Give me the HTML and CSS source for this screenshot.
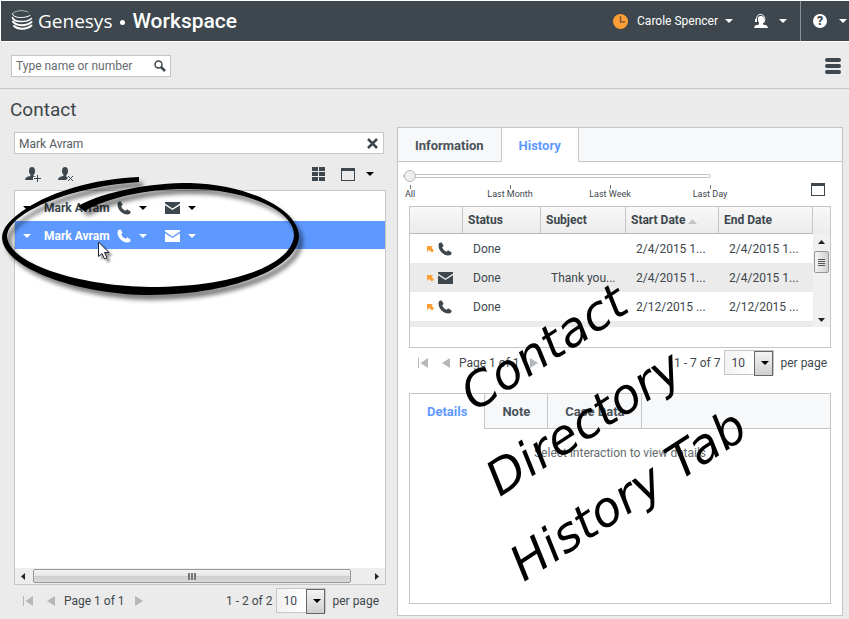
FILE: index.html
```html
<!DOCTYPE html>
<html lang="en">
<head>
<meta charset="utf-8">
<title>Genesys Workspace</title>
<link rel="stylesheet" href="styles.css">
</head>
<body>
<svg class="defs" aria-hidden="true">
  <symbol id="phone" viewBox="0 0 14 14"><path d="M1 1.200 3.400.200 5.700 3.800 4.200 5.300C4.800 7.200 6.600 9 8.600 9.800L10.200 8.300 13.800 10.700 12.800 13C7 15.500-1.500 8 1 1.200Z"/></symbol>
  <symbol id="mail" viewBox="0 0 15 12"><path d="M0 0H15V1.500L7.500 6.500 0 1.500ZM0 3.200 7.500 8 15 3.200V12H0Z"/></symbol>
  <symbol id="caret" viewBox="0 0 8 4"><path d="M0 0H8L4 4Z"/></symbol>
  <symbol id="person" viewBox="0 0 17 15"><ellipse cx="7" cy="4" rx="3" ry="4"/><path d="M5.500 7H8.500V9L11 10V13H0C0 10.500 2 9.800 5.500 9Z"/></symbol>
  <symbol id="window" viewBox="0 0 14 13"><path fill-rule="evenodd" d="M0 0H14V13H0ZM1 3V12H13V3Z"/></symbol>
  <symbol id="first" viewBox="0 0 10 10"><path d="M0 0H1V10H0ZM10 0V10L2.500 5Z"/></symbol>
  <symbol id="prev" viewBox="0 0 8 10"><path d="M8 0V10L0 5Z"/></symbol>
  <symbol id="next" viewBox="0 0 8 10"><path d="M0 0V10L8 5Z"/></symbol>
  <symbol id="inbound" viewBox="0 0 7 7"><path d="M0 0H6L4.500 1.600 7 4.500 5 6.500 2 4 0 6Z"/></symbol>
</svg>

<header class="topbar">
  <svg class="logo" viewBox="0 0 22 22" aria-hidden="true"><g fill="none" stroke="#fff" stroke-linecap="round"><path stroke-width="1" opacity=".6" d="M17 2C12-.500 3 .500 1.500 4"/><path stroke-width="1" d="M1.500 4C2 8.500 14 8.500 19 5.500"/><path stroke-width="1.600" d="M1.500 7.500C3 13 16 12.500 20.500 8.500"/><path stroke-width="2" d="M2 11.500C5 16.500 16 16 20.500 12"/><path stroke-width="2" d="M3 16C7 20 16 19.500 20.500 15.500"/></g></svg>
  <span class="brand">Genesys</span>
  <i class="dot"></i>
  <span class="product">Workspace</span>
  <button class="topbtn user"><svg width="15" height="15" viewBox="0 0 15 15"><circle cx="7.500" cy="7.500" r="7.500" fill="#ff9e35"/><path d="M7.500 2V8H12" fill="none" stroke="#7b5a38" stroke-width="1.500"/></svg><span>Carole Spencer</span><svg class="caret"><use href="#caret"/></svg></button>
  <button class="topbtn agent" aria-label="Agent"><svg width="16" height="16" viewBox="0 0 16 16"><path d="M3.500 7C2.500-.500 12.500-.500 11.800 7L11 9.500H6" fill="none" stroke="#fff"/><path fill="#fff" d="M5 4.500C6 2.500 10 2.500 11 4.500V8C10 11 6 11 5 8ZM6 10H10V11.500L14 12.500 15 15H1L2 12.500 6 11.500Z"/><path d="M3 6V9" stroke="#fff" stroke-width="2"/></svg><svg class="caret"><use href="#caret"/></svg></button>
  <button class="topbtn help" aria-label="Help"><span class="question">?</span><svg class="caret"><use href="#caret"/></svg></button>
</header>

<div class="toolbar">
  <div class="search">
    <input type="text" placeholder="Type name or number" aria-label="Type name or number">
    <svg width="12" height="12" viewBox="0 0 12 12"><circle cx="4.500" cy="4.500" r="3.500" fill="none" stroke="#3d474d" stroke-width="1.500"/><path d="M7 7 11 11" stroke="#3d474d" stroke-width="2.500"/></svg>
  </div>
  <button class="menu" aria-label="Menu"><i></i><i></i><i></i></button>
</div>

<h1>Contact</h1>
<main>
  <section class="directory">
    <div class="filter"><input type="text" value="Mark Avram" aria-label="Contact name"><button aria-label="Clear"><svg width="11" height="11" viewBox="0 0 11 11"><path d="M1 1 10 10M10 1 1 10" stroke="#3d474d" stroke-width="2.500"/></svg></button></div>
    <div class="actions">
      <button aria-label="Add contact"><svg width="17" height="15"><use href="#person"/><path d="M8 11.500H16M12.500 8V15" stroke="#ebebeb" stroke-width="3"/><path d="M9 11.500H16M12.500 8V15" stroke="#3d474d"/></svg></button>
      <button aria-label="Remove contact"><svg width="17" height="15"><use href="#person"/><path d="M9 8 15 14M15 8 9 14" stroke="#ebebeb" stroke-width="3"/><path d="M10 9 15 14M15 9 10 14" stroke="#3d474d"/></svg></button>
      <span class="spacer"></span>
      <button aria-label="Grid view"><svg width="13" height="14" viewBox="0 0 13 14"><path d="M0 0H6V4H0ZM7 0H13V4H7ZM0 5H6V9H0ZM7 5H13V9H7ZM0 10H6V14H0ZM7 10H13V14H7Z"/></svg></button>
      <button aria-label="Layout"><svg width="14" height="13"><use href="#window"/></svg></button>
      <button aria-label="Layout options"><svg class="caret black"><use href="#caret"/></svg></button>
    </div>
    <div class="list">
      <div class="contact"><svg class="caret"><use href="#caret"/></svg><b>Mark Avram</b><svg class="phone"><use href="#phone"/></svg><svg class="caret"><use href="#caret"/></svg><svg class="mail"><use href="#mail"/></svg><svg class="caret"><use href="#caret"/></svg></div>
      <div class="contact selected"><svg class="caret"><use href="#caret"/></svg><b>Mark Avram</b><svg class="phone"><use href="#phone"/></svg><svg class="caret"><use href="#caret"/></svg><svg class="mail"><use href="#mail"/></svg><svg class="caret"><use href="#caret"/></svg></div>
      <div class="hscroll"><svg width="4" height="7" viewBox="0 0 4 7"><path d="M4 0V7L0 3.500Z"/></svg><span class="hthumb"><i></i><i></i><i></i></span><svg width="4" height="7" viewBox="0 0 4 7"><path d="M0 0V7L4 3.500Z"/></svg></div>
    </div>
    <div class="pager">
      <button aria-label="First"><svg width="10" height="10"><use href="#first"/></svg></button><button aria-label="Previous"><svg width="8" height="10"><use href="#prev"/></svg></button><span>Page 1 of 1</span><button aria-label="Next"><svg width="8" height="10"><use href="#next"/></svg></button>
      <span class="spacer"></span><span>1 - 2 of 2</span>
      <label><span class="select"><select><option>10</option></select></span>per page</label>
    </div>
  </section>

  <section class="panel">
    <nav class="tabs"><button>Information</button><button class="active">History</button></nav>
    <div class="body">
      <div class="timeline">
        <div class="range"><input type="range" min="0" max="3" value="0" aria-label="Period">
          <div class="ticks"><span>All</span><span>Last Month</span><span>Last Week</span><span>Last Day</span></div></div>
        <button aria-label="Show details"><svg width="14" height="13"><use href="#window"/></svg></button>
      </div>
      <div class="grid">
        <table>
          <colgroup><col class="c1"><col class="c2"><col class="c3"><col class="c4"><col class="c5"></colgroup>
          <thead><tr><th></th><th>Status</th><th>Subject</th><th>Start Date <svg width="9" height="5" viewBox="0 0 9 5"><path fill="#c3c5c6" d="M0 5H9L4.500 0Z"/></svg></th><th>End Date</th></tr></thead>
          <tbody>
            <tr><td class="kind"><svg class="in"><use href="#inbound"/></svg><svg class="phone"><use href="#phone"/></svg></td><td>Done</td><td></td><td>2/4/2015 1...</td><td>2/4/2015 1...</td></tr>
            <tr><td class="kind"><svg class="in"><use href="#inbound"/></svg><svg class="mail"><use href="#mail"/></svg></td><td>Done</td><td>Thank you...</td><td>2/4/2015 1...</td><td>2/4/2015 1...</td></tr>
            <tr><td class="kind"><svg class="in"><use href="#inbound"/></svg><svg class="phone"><use href="#phone"/></svg></td><td>Done</td><td></td><td>2/12/2015 ...</td><td>2/12/2015 ...</td></tr>
            <tr class="partial"><td colspan="5"></td></tr>
          </tbody>
        </table>
        <div class="vscroll"><span class="corner"></span><div class="vtrack"><svg width="7" height="4" viewBox="0 0 7 4"><path d="M0 4H7L3.500 0Z"/></svg><span class="vthumb"><i></i><i></i><i></i><i></i></span><svg class="down" width="7" height="4" viewBox="0 0 7 4"><path d="M0 0H7L3.500 4Z"/></svg></div></div>
      </div>
      <div class="pager">
        <button aria-label="First"><svg width="10" height="10"><use href="#first"/></svg></button><button aria-label="Previous"><svg width="8" height="10"><use href="#prev"/></svg></button><span>Page 1 of 1</span><button aria-label="Next"><svg width="8" height="10"><use href="#next"/></svg></button>
        <span class="spacer"></span><span>1 - 7 of 7</span>
        <label><span class="select"><select><option>10</option></select></span>per page</label>
      </div>
      <div class="details">
        <nav class="tabs small"><button class="active">Details</button><button>Note</button><button>Case Data</button></nav>
        <p>Select interaction to view details</p>
      </div>
    </div>
  </section>
</main>

<svg class="ring" width="310" height="135" viewBox="0 170 310 135" aria-hidden="true">
  <path d="M139 177C92 179 52 192 27 208C10 219 2 228 2 238C4 269 80 295 150 295C234 295 299 267 299 236C298 208 245 184 190 183C150 183 105 191 78 206L84 211C110 197 150 188 190 189C240 189 294 208 294 235C293 264 235 287 150 287C80 286 8 264 7 236C8 225 20 214 45 203C75 190 110 184 139 182Z"/>
</svg>
<svg class="pointer" width="12" height="19" viewBox="0 0 12 19" aria-hidden="true"><path fill="#fff" stroke="#223" d="M.500 1V15.500L4 12.500 6.500 18 9 17 6.500 11.500H11Z"/></svg>
<div class="note n1">Contact</div>
<div class="note n2">Directory</div>
<div class="note n3">History Tab</div>
</body>
</html>
```
FILE: styles.css
```css
* { box-sizing: border-box; }
body { margin: 0; min-height: 100vh; display: flex; flex-direction: column; position: relative; background: #ebebeb; color: #3d474d; font: 12px/16px Roboto, "Liberation Sans", sans-serif; overflow: hidden; }
svg { display: block; fill: currentColor; flex: none; }
.defs { position: absolute; width: 0; height: 0; }
button { border: 0; padding: 0; background: none; color: inherit; font: inherit; }
input, select { font: inherit; color: inherit; }
.caret { width: 8px; height: 4px; }
.phone { width: 14px; height: 14px; }
.mail { width: 15px; height: 12px; }
.spacer { flex: 1; }

.topbar { display: flex; align-items: center; height: 42px; border: 1px solid #fff; border-right: 0; background: #3d474d; color: #fff; padding-left: 10px; }
.logo { width: 22px; height: 22px; }
.brand { margin-left: 5px; font: 19px/24px "Open Sans", sans-serif; }
.dot { width: 5px; height: 5px; margin: 2px 7px 0 8px; border-radius: 50%; background: #fff; }
.product { margin-right: auto; font-size: 21px; font-weight: 500; line-height: 24px; }
.topbtn { display: flex; align-items: center; height: 40px; }
.user { gap: 7px; }
.user span { margin-left: 2px; }
.agent { gap: 10px; margin-left: 20px; }
.help { gap: 12px; margin-left: 13px; padding-left: 12px; padding-right: 2px; border-left: 1px solid #8b9194; }
.question { width: 14px; height: 14px; border-radius: 50%; background: #fff; color: #3d474d; font-weight: 900; line-height: 14px; text-align: center; }

.toolbar { display: flex; align-items: center; justify-content: space-between; height: 47px; padding: 1px 8px 0 11px; border-bottom: 1px solid #c4c6c7; }
.search, .filter { display: flex; align-items: center; height: 22px; background: #fff; border: 1px solid #c4c6c7; }
.search { width: 160px; padding-right: 4px; }
.search input, .filter input { flex: 1; min-width: 0; border: 0; padding: 1px 4px 0; background: none; outline: 0; color: #555c60; }
.search input::placeholder { color: #666c70; opacity: 1; }
.menu { width: 16px; display: grid; gap: 2px; }
.menu i { height: 4px; border-radius: 2px; background: #3d474d; }

h1 { margin: 8px 0 5px 10px; font-size: 19px; font-weight: 400; line-height: 25px; }
main { flex: 1; display: grid; grid-template-columns: 372fr 446fr; gap: 11px; padding: 0 6px 3px 14px; }
.directory { display: flex; flex-direction: column; padding-top: 5px; min-width: 0; }
.filter { margin-right: 2px; padding-right: 5px; }
.actions { display: flex; align-items: center; height: 36px; padding: 4px 12px 0 11px; gap: 16px; }
.actions button:last-child { margin-left: -5px; }
.black { color: #000; }
.list { flex: 1; display: flex; flex-direction: column; padding-top: 2px; background: #fff; border: 1px solid #c4c6c7; }
.contact { display: flex; align-items: center; height: 28px; padding: 1px 0 0 8px; }
.contact b { width: 66px; margin: 0 7px 0 13px; white-space: nowrap; }
.contact .phone + .caret { margin: 0 18px 0 8px; }
.contact .mail + .caret { margin-left: 8px; }
.contact .caret { color: #000; }
.selected { background: #5e99ff; color: #fff; }
.contact.selected .caret { color: #fff; }
.hscroll { display: flex; align-items: center; gap: 8px; height: 16px; margin-top: auto; padding: 0 6px; background: #ededed; color: #222; }
.hthumb { flex: 1; margin-right: 16px; height: 14px; border: 1px solid #979797; border-radius: 2px; background: linear-gradient(#f4f4f4, #e5e5e5 50%, #cecece 51%, #dadada); display: flex; align-items: center; justify-content: center; gap: 1px; }
.hthumb i { width: 2px; height: 7px; background: #777; }

.pager { display: flex; align-items: center; height: 31px; padding: 0 7px 0 9px; }
.pager button { color: #b4b8ba; }
.pager button:nth-of-type(2) { margin: 0 9px 0 14px; }
.pager span + button { margin-left: 10px; }
.pager label { display: flex; align-items: center; gap: 6px; margin-left: 4px; }
.select { position: relative; }
.select select { appearance: none; display: block; width: 50px; height: 25px; padding: 0 6px; border: 1px solid #c4c6c7; border-radius: 0; background: linear-gradient(90deg, #f2f2f2, #fff 60%); }
.select::before { content: ""; position: absolute; right: 1px; top: 1px; width: 17px; height: 23px; border: 1px solid #666; background: linear-gradient(#f4f4f4, #cfcfcf); pointer-events: none; }
.select::after { content: ""; position: absolute; right: 5px; top: 11px; border: 4px solid transparent; border-top-color: #000; border-bottom: 0; pointer-events: none; }

.panel { display: flex; flex-direction: column; border: 1px solid #c4c6c7; background: #fff; min-width: 0; }
.tabs { display: flex; height: 34px; background: #f6f8fa; box-shadow: inset 0 -1px #c4c6c7; }
.tabs button { padding: 1px 17px 0; border-right: 1px solid #c4c6c7; font-size: 13px; font-weight: 700; color: #4a5359; }
.tabs .active { background: #fff; color: #5e99ff; }
.body { flex: 1; display: flex; flex-direction: column; padding: 7px 11px 11px; }
.timeline { display: flex; justify-content: space-between; height: 37px; }
.timeline > button { align-self: flex-end; margin: 0 6px 10px 0; }
.range { width: 308px; margin-left: -6px; }
.range input { appearance: none; display: block; width: 100%; height: 14px; margin: 0; background: none; }
.range input::-webkit-slider-runnable-track { height: 4px; border: 1px solid #c4c6c7; border-radius: 2px; background: #fff; }
.range input::-webkit-slider-thumb { appearance: none; width: 12px; height: 12px; margin-top: -5px; border: 1px solid #b8babb; border-radius: 50%; background: #efefef; }
.ticks { display: flex; margin: 2px 0 0 -43px; font-size: 9px; line-height: 11px; }
.ticks span { flex: none; width: 100px; text-align: center; }
.ticks span::before { content: ""; display: block; width: 1px; height: 4px; margin: 0 auto; background: #777; }
.grid { display: flex; height: 142px; border: 1px solid #c4c6c7; }
table { flex: 1; align-self: flex-start; table-layout: fixed; width: 0; border-collapse: separate; border-spacing: 0; }
.c1 { width: 53px; } .c2 { width: 78px; } .c3 { width: 85px; } .c4 { width: 93px; } .c5 { width: 94px; }
th { height: 27px; padding: 0 5px; border-right: 1px solid #c4c6c7; border-bottom: 1px solid #b8babb; background: linear-gradient(#f8f8f8, #ececec); text-align: left; white-space: nowrap; }
th svg { display: inline-block; vertical-align: 0; }
td { height: 29px; padding: 0 0 0 10px; white-space: nowrap; }
tbody tr:nth-child(even) { background: #ebebeb; }
.partial td { height: 6px; }
.kind svg { display: inline-block; vertical-align: middle; }
td.kind { padding-left: 17px; font-size: 0; }
.in { width: 7px; height: 7px; margin: 2px 4px 0 0; color: #ff9e35; }
.vscroll { width: 17px; height: 120px; display: flex; flex-direction: column; }
.corner { height: 27px; background: linear-gradient(#f8f8f8, #ececec); }
.vtrack { flex: 1; display: flex; flex-direction: column; align-items: center; padding: 6px 1px 5px; background: #f0f0f0; color: #222; }
.vthumb { width: 15px; height: 22px; margin-top: 7px; border: 1px solid #979797; border-radius: 2px; background: linear-gradient(90deg, #f4f4f4, #d0d0d0); display: grid; align-content: center; justify-content: center; gap: 1px; }
.vthumb i { width: 7px; height: 1px; background: #555; }
.down { margin-top: auto; }
.body .pager { height: 29px; padding-right: 4px; }
.details { flex: 1; margin-top: 16px; border: 1px solid #c4c6c7; }
.small { height: 35px; }
.details p { margin: 16px 0; text-align: center; color: #666c70; }

/* Annotation layer */
.ring { position: absolute; left: 0; top: 170px; color: #000; filter: drop-shadow(4px 5px 2px rgba(0, 0, 0, .5)); pointer-events: none; }
.pointer { position: absolute; left: 98px; top: 241px; filter: drop-shadow(3px 3px 1px rgba(0, 0, 0, .4)); pointer-events: none; }
.note { position: absolute; color: #000; font: italic 400 48px/50px "DejaVu Sans", sans-serif; white-space: nowrap; transform: rotate(-33deg); transform-origin: 0 100%; pointer-events: none; }
.n1 { left: 479px; top: 369px; }
.n2 { left: 504px; top: 454px; }
.n3 { left: 528px; top: 539px; }
```
